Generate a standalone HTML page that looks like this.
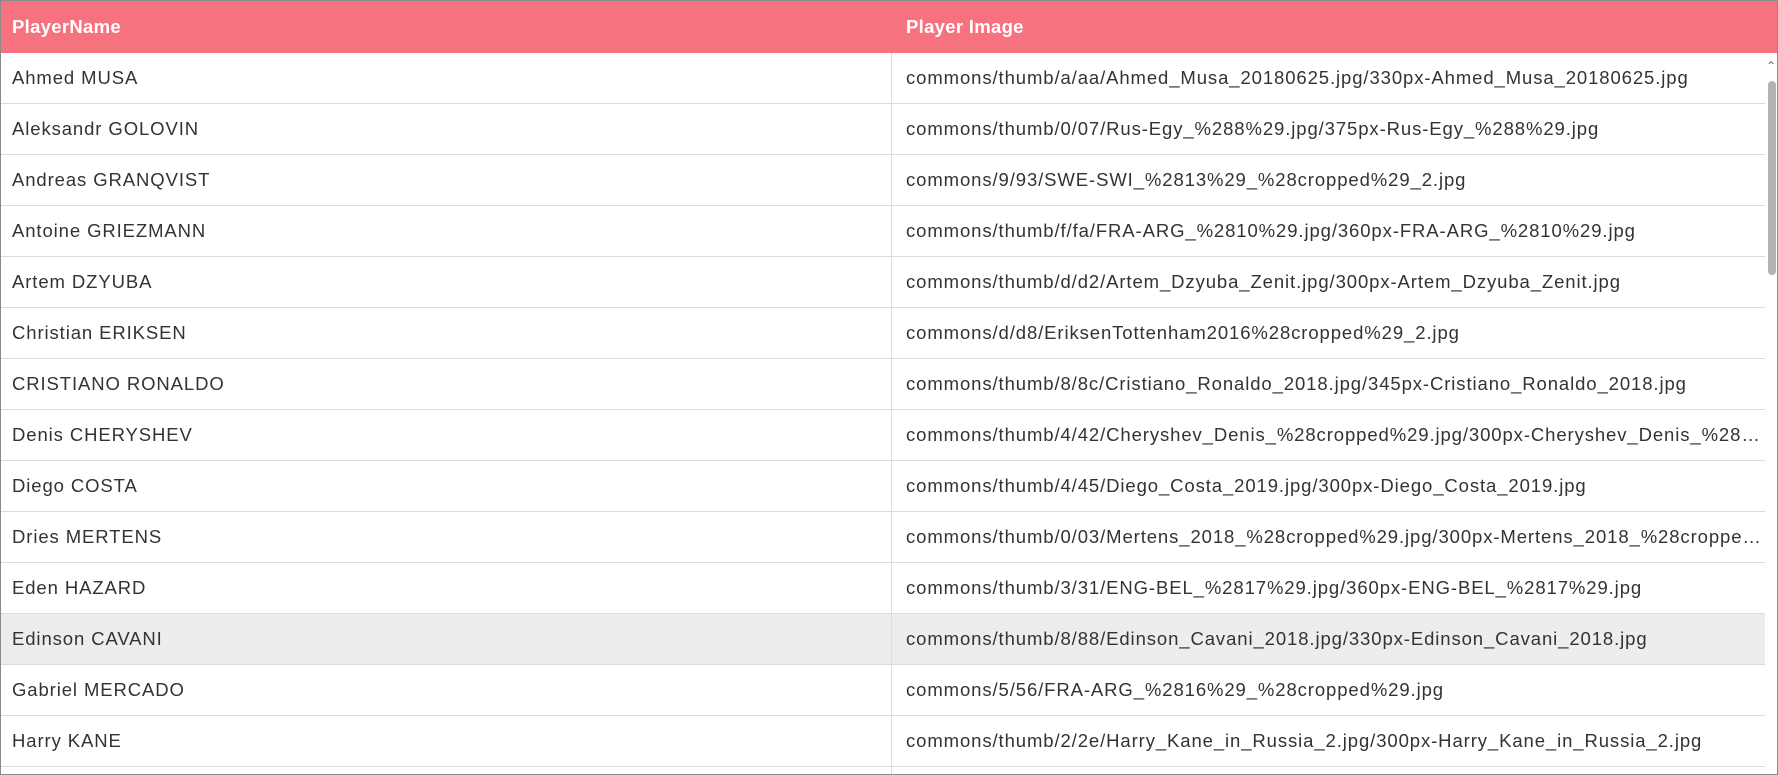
<!DOCTYPE html>
<html><head><style>
html,body{margin:0;width:1778px;height:775px;overflow:hidden;background:#fff;font-family:"Liberation Sans",sans-serif;}
.g{position:absolute;left:0;top:0;width:1776px;height:773px;border:1px solid #8a8a8a;overflow:hidden;}
.h{position:absolute;left:0;top:0;width:1776px;height:52px;background:#f7727f;color:#fff;font-weight:bold;font-size:18.5px;}
.h div{position:absolute;top:0;line-height:52px;letter-spacing:0.3px;}
.rows{position:absolute;left:0;top:52px;width:1764px;height:721px;overflow:hidden;}
.r{height:50px;border-bottom:1px solid #dcdcdc;position:relative;font-size:18.5px;letter-spacing:0.9px;color:#333;}
.r.s{background:#ededed;}
.r div{position:absolute;top:0;line-height:50px;white-space:nowrap;overflow:hidden;text-overflow:ellipsis;}
.c1{left:11px;width:860px;}
.c2{left:905px;width:855px;}
.vl{position:absolute;left:890px;top:0;width:1px;height:773px;background:#dcdcdc;}
.sb{position:absolute;left:1767px;top:80px;width:8px;height:194px;background:#b3b3b3;border-radius:4px;}
.ar{position:absolute;left:1765px;top:58px;font-size:12px;color:#666;}
</style></head><body>
<div class="g">
<div class="rows">
<div class="r"><div class="c1">Ahmed MUSA</div><div class="c2">commons/thumb/a/aa/Ahmed_Musa_20180625.jpg/330px-Ahmed_Musa_20180625.jpg</div></div>
<div class="r"><div class="c1">Aleksandr GOLOVIN</div><div class="c2">commons/thumb/0/07/Rus-Egy_%288%29.jpg/375px-Rus-Egy_%288%29.jpg</div></div>
<div class="r"><div class="c1">Andreas GRANQVIST</div><div class="c2">commons/9/93/SWE-SWI_%2813%29_%28cropped%29_2.jpg</div></div>
<div class="r"><div class="c1">Antoine GRIEZMANN</div><div class="c2">commons/thumb/f/fa/FRA-ARG_%2810%29.jpg/360px-FRA-ARG_%2810%29.jpg</div></div>
<div class="r"><div class="c1">Artem DZYUBA</div><div class="c2">commons/thumb/d/d2/Artem_Dzyuba_Zenit.jpg/300px-Artem_Dzyuba_Zenit.jpg</div></div>
<div class="r"><div class="c1">Christian ERIKSEN</div><div class="c2">commons/d/d8/EriksenTottenham2016%28cropped%29_2.jpg</div></div>
<div class="r"><div class="c1">CRISTIANO RONALDO</div><div class="c2">commons/thumb/8/8c/Cristiano_Ronaldo_2018.jpg/345px-Cristiano_Ronaldo_2018.jpg</div></div>
<div class="r"><div class="c1">Denis CHERYSHEV</div><div class="c2">commons/thumb/4/42/Cheryshev_Denis_%28cropped%29.jpg/300px-Cheryshev_Denis_%28cropped%29.jpg</div></div>
<div class="r"><div class="c1">Diego COSTA</div><div class="c2">commons/thumb/4/45/Diego_Costa_2019.jpg/300px-Diego_Costa_2019.jpg</div></div>
<div class="r"><div class="c1">Dries MERTENS</div><div class="c2">commons/thumb/0/03/Mertens_2018_%28cropped%29.jpg/300px-Mertens_2018_%28cropped%29.jpg</div></div>
<div class="r"><div class="c1">Eden HAZARD</div><div class="c2">commons/thumb/3/31/ENG-BEL_%2817%29.jpg/360px-ENG-BEL_%2817%29.jpg</div></div>
<div class="r s"><div class="c1">Edinson CAVANI</div><div class="c2">commons/thumb/8/88/Edinson_Cavani_2018.jpg/330px-Edinson_Cavani_2018.jpg</div></div>
<div class="r"><div class="c1">Gabriel MERCADO</div><div class="c2">commons/5/56/FRA-ARG_%2816%29_%28cropped%29.jpg</div></div>
<div class="r"><div class="c1">Harry KANE</div><div class="c2">commons/thumb/2/2e/Harry_Kane_in_Russia_2.jpg/300px-Harry_Kane_in_Russia_2.jpg</div></div>
<div class="r"><div class="c1"></div><div class="c2"></div></div>
</div>
<div class="vl"></div>
<div class="h"><div style="left:11px">PlayerName</div><div style="left:905px">Player Image</div></div>
<div class="ar">&#8963;</div>
<div class="sb"></div>
</div>
</body></html>
